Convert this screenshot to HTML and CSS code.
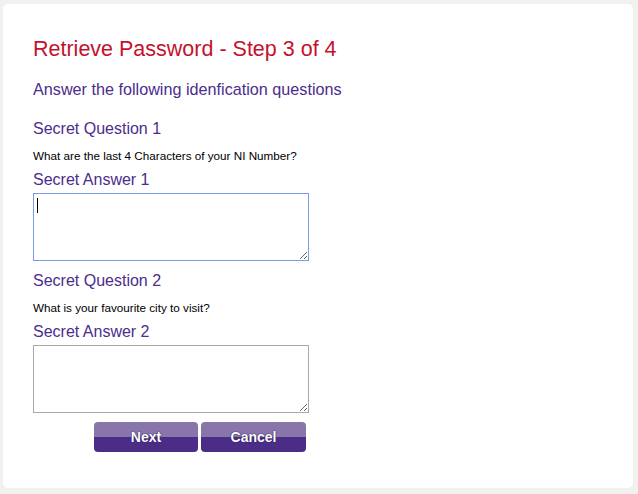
FILE: index.html
```html
<!DOCTYPE html>
<html lang="en">

<head>
    <meta charset="UTF-8">
    <meta name="viewport" content="width=device-width, initial-scale=1.0">
    <title>Retrieve Password</title>
    <link rel="stylesheet" href="styles.css">
</head>

<body>
    <div class="card">
        <h1 class="title">Retrieve Password - Step 3 of 4</h1>
        <p class="intro">Answer the following idenfication questions</p>

        <h2 class="label">Secret Question 1</h2>
        <p class="question">What are the last 4 Characters of your NI Number?</p>
        <h2 class="label answer">Secret Answer 1</h2>
        <textarea class="box active" autofocus></textarea>

        <h2 class="label second">Secret Question 2</h2>
        <p class="question">What is your favourite city to visit?</p>
        <h2 class="label answer">Secret Answer 2</h2>
        <textarea class="box"></textarea>

        <div class="buttons">
            <button class="btn next">Next</button>
            <button class="btn cancel">Cancel</button>
        </div>
    </div>
</body>

</html>
```

FILE: styles.css
```css
body {
    margin: 0;
    padding: 4px 5px 6px 3px;
    background: #f1f1f1;
    font-family: "Liberation Sans", Arial, sans-serif;
}

.card {
    height: 484px;
    box-sizing: border-box;
    background: #fff;
    border-radius: 5px;
    padding: 33px 30px 0 30px;
}

.title {
    margin: 0;
    font-size: 21.5px;
    font-weight: normal;
    line-height: 25px;
    color: #c5112e;
}

.intro {
    margin: 18px 0 0 0;
    font-size: 16.2px;
    line-height: 18px;
    color: #4b2d8c;
}

.label {
    margin: 22px 0 0 0;
    font-size: 16px;
    font-weight: normal;
    line-height: 18px;
    color: #4b2d8c;
}

.label.answer {
    margin-top: 9px;
}

.label.second {
    margin-top: 11px;
}

.question {
    margin: 11px 0 0 0;
    font-size: 11.7px;
    line-height: 13px;
    color: #000;
}

.box {
    display: block;
    margin-top: 4px;
    width: 276px;
    height: 68px;
    box-sizing: border-box;
    border: 1px solid #a9a9a9;
    padding: 2px;
    font-family: "Liberation Mono", monospace;
    font-size: 13px;
    resize: vertical;
}

.box.active {
    border-color: #7a9ce6;
    outline: none;
    /* caret shown in the reference */
    background: linear-gradient(#000, #000) no-repeat 3px 4px / 1px 15px, #fff;
}

.box:focus {
    outline: none;
    border-color: #7a9ce6;
}

.buttons {
    display: flex;
    gap: 3px;
    margin-top: 9px;
    padding-left: 61px;
}

.btn {
    height: 30px;
    border: none;
    border-radius: 4px;
    background: linear-gradient(to bottom, #8875a9 0, #8875a9 50%, #4b2d88 50%, #4b2d88 100%);
    color: #fff;
    font-family: "Liberation Sans", Arial, sans-serif;
    font-size: 14px;
    font-weight: bold;
    text-shadow: 0 0 1px #2a1a55, 0 0 1px #2a1a55;
    padding: 0;
}

.next {
    width: 104px;
}

.cancel {
    width: 105px;
}
```
